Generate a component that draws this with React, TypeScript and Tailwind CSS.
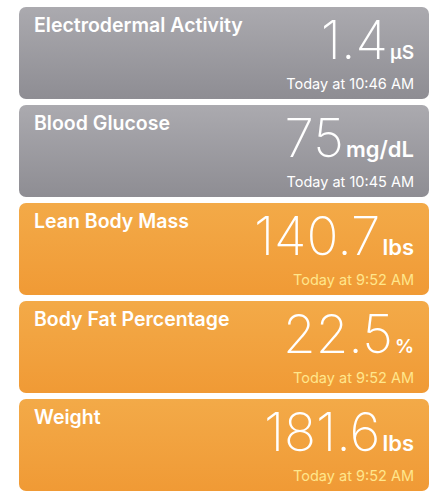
import React from 'react';

type Metric = {
  title: string;
  value: string;
  unit: string;
  unitSize: string;
  time: string;
  tone: 'grey' | 'orange';
};

const metrics: Metric[] = [
  { title: 'Electrodermal Activity', value: '1.4', unit: 'µS', unitSize: 'text-[19px]', time: 'Today at 10:46 AM', tone: 'grey' },
  { title: 'Blood Glucose', value: '75', unit: 'mg/dL', unitSize: 'text-[22px]', time: 'Today at 10:45 AM', tone: 'grey' },
  { title: 'Lean Body Mass', value: '140.7', unit: 'lbs', unitSize: 'text-[22px]', time: 'Today at 9:52 AM', tone: 'orange' },
  { title: 'Body Fat Percentage', value: '22.5', unit: '%', unitSize: 'text-[19px]', time: 'Today at 9:52 AM', tone: 'orange' },
  { title: 'Weight', value: '181.6', unit: 'lbs', unitSize: 'text-[22px]', time: 'Today at 9:52 AM', tone: 'orange' },
];

const MetricCard: React.FC<{ m: Metric }> = ({ m }) => {
  const grey = m.tone === 'grey';
  return (
    <div
      className={
        grey
          ? 'h-[92px] rounded-[7px] px-[15px] flex justify-between bg-gradient-to-b from-[#abaaaf] to-[#8e8d93] text-white'
          : 'h-[92px] rounded-[7px] px-[15px] flex justify-between bg-gradient-to-b from-[#f3aa48] to-[#f09a35] text-white'
      }
    >
      <div className="pt-[6px] text-[19.5px] leading-[24px] font-semibold">{m.title}</div>
      <div className="flex flex-col items-end">
        <div className="mt-[6px] h-[54px] flex items-baseline">
          <span className="text-[53px] leading-[54px] font-extralight">{m.value}</span>
          <span className={`${m.unitSize} leading-none font-semibold ml-[2px]`}>{m.unit}</span>
        </div>
        <div className={grey ? 'mt-[7px] text-[14.5px] leading-[20px] text-white' : 'mt-[7px] text-[14.5px] leading-[20px] text-[#ffe68c]'}>
          {m.time}
        </div>
      </div>
    </div>
  );
};

export default function App() {
  return (
    <div className="w-[448px] h-[500px] bg-white px-[19px] pt-[7px] flex flex-col gap-[6px] font-['Inter',sans-serif]">
      {metrics.map((m) => (
        <MetricCard key={m.title} m={m} />
      ))}
    </div>
  );
}
